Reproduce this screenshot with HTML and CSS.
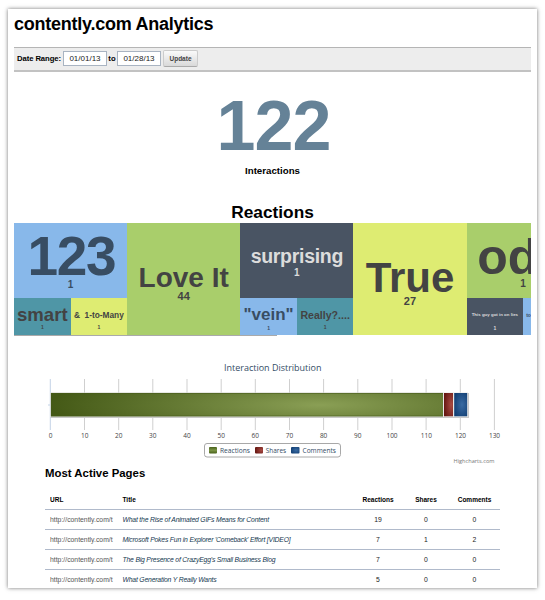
FILE: index.html
```html
<!DOCTYPE html>
<html lang="en">
<head>
<meta charset="utf-8">
<title>contently.com Analytics</title>
<link rel="stylesheet" href="styles.css">
</head>
<body>
<main class="card">
  <h1>contently.com Analytics</h1>
  <form class="filter">
    <b>Date Range:</b><span class="field">01/01/13</span><b>to</b><span class="field">01/28/13</span><button type="button">Update</button>
  </form>
  <section class="total">
    <div class="big">122</div>
    <div class="caption">Interactions</div>
  </section>
  <h2>Reactions</h2>
  <section class="map">
    <div class="col">
      <div class="tile blue w123"><span class="word">123</span><span class="n">1</span></div>
      <div class="pair">
        <div class="tile teal wsmart"><span class="word">smart</span><span class="n">1</span></div>
        <div class="tile yellow wmany"><span class="word">&amp;&nbsp; 1-to-Many</span><span class="n">1</span></div>
      </div>
    </div>
    <div class="col"><div class="tile green wlove"><span class="word">Love It</span><span class="n">44</span></div></div>
    <div class="col">
      <div class="tile slate wsurp"><span class="word">surprising</span><span class="n">1</span></div>
      <div class="pair">
        <div class="tile blue wvein"><span class="word">"vein"</span><span class="n">1</span></div>
        <div class="tile teal wreally"><span class="word">Really?....</span><span class="n">1</span></div>
      </div>
    </div>
    <div class="col"><div class="tile yellow wtrue"><span class="word">True</span><span class="n">27</span></div></div>
    <div class="col">
      <div class="tile green wodd"><span class="word">odd</span><span class="n">1</span></div>
      <div class="pair">
        <div class="tile slate wguy"><span class="word">This guy got in on lies</span><span class="n">1</span></div>
        <div class="tile blue wto"><span class="word">to</span></div>
      </div>
    </div>
  </section>
  <div class="scroll"></div>
  <svg class="chart" width="517" height="110" viewBox="14 358 517 110">
    <defs>
      <radialGradient id="g" gradientUnits="userSpaceOnUse" cx="320" cy="405" r="270" gradientTransform="translate(0 348.3) scale(1 .14)"><stop offset="0" stop-color="#8a9f55"/><stop offset="1" stop-color="#445916"/></radialGradient>
      <radialGradient id="r" cx=".8" cy=".5" r=".8"><stop offset="0" stop-color="#a84a42"/><stop offset="1" stop-color="#661712"/></radialGradient>
      <radialGradient id="b" cx=".6" cy=".5" r=".65"><stop offset="0" stop-color="#3a6ba3"/><stop offset="1" stop-color="#123f74"/></radialGradient>
      <linearGradient id="lg" x2="0" y2="1"><stop offset="0" stop-color="#48611a"/><stop offset=".5" stop-color="#7a9345"/><stop offset="1" stop-color="#48611a"/></linearGradient>
    </defs>
    <text class="ct" x="224" y="371.3" textLength="97.5" lengthAdjust="spacingAndGlyphs">Interaction Distribution</text>
    <path class="grid" d="M84.5 379v51M118.7 379v51M152.8 379v51M187 379v51M221.2 379v51M255.3 379v51M289.5 379v51M323.6 379v51M357.8 379v51M392 379v51M426.1 379v51M460.3 379v51M494.4 379v51"/>
    <path class="axis" d="M50.3 379v51M48 405h2"/>
    <rect x="50.5" y="393" width="418.5" height="25" fill="#c9c9c9"/>
    <rect x="50.5" y="392.5" width="417.5" height="24.5" fill="#e8e8e8"/>
    <rect x="51" y="393" width="392" height="23.3" fill="url(#g)"/>
    <path d="M51 393.4h392M51 416h392M51.4 393v23" stroke="#465a1b" stroke-width=".8" opacity=".75"/>
    <rect x="444" y="393" width="9" height="23.3" fill="url(#r)"/>
    <rect x="454.2" y="393" width="13" height="23.3" fill="url(#b)"/>
    <g class="tick">
      <text x="50.5" y="438">0</text><text x="84.7" y="438">10</text><text x="118.7" y="438">20</text><text x="152.8" y="438">30</text><text x="187" y="438">40</text><text x="221.2" y="438">50</text><text x="255.3" y="438">60</text><text x="289.5" y="438">70</text><text x="323.6" y="438">80</text><text x="357.8" y="438">90</text><text x="392" y="438">100</text><text x="426.3" y="438">110</text><text x="460.5" y="438">120</text><text x="494.5" y="438">130</text>
    </g>
    <rect x="204.5" y="443.5" width="136" height="13.5" rx="2.5" fill="#fff" stroke="#a8a8a8"/>
    <rect x="209" y="447" width="8" height="6.5" rx="1" fill="url(#lg)"/>
    <rect x="255" y="447" width="8" height="6.5" rx="1" fill="url(#r)"/>
    <rect x="291" y="447" width="8.5" height="6.5" rx="1" fill="url(#b)"/>
    <g class="leg">
      <text x="220" y="453" textLength="30" lengthAdjust="spacingAndGlyphs">Reactions</text>
      <text x="265.7" y="453" textLength="20.5" lengthAdjust="spacingAndGlyphs">Shares</text>
      <text x="302.5" y="453" textLength="33.5" lengthAdjust="spacingAndGlyphs">Comments</text>
    </g>
    <text class="credit" x="453.5" y="463" textLength="41" lengthAdjust="spacingAndGlyphs">Highcharts.com</text>
  </svg>
  <h3>Most Active Pages</h3>
  <div class="table">
    <div class="row head"><span class="url">URL</span><span class="title">Title</span><span>Reactions</span><span>Shares</span><span>Comments</span></div>
    <div class="row"><span class="url">http://contently.com/t</span><span class="title">What the Rise of Animated GIFs Means for Content</span><span>19</span><span>0</span><span>0</span></div>
    <div class="row"><span class="url">http://contently.com/t</span><span class="title">Microsoft Pokes Fun in Explorer 'Comeback' Effort [VIDEO]</span><span>7</span><span>1</span><span>2</span></div>
    <div class="row"><span class="url">http://contently.com/t</span><span class="title">The Big Presence of CrazyEgg's Small Business Blog</span><span>7</span><span>0</span><span>0</span></div>
    <div class="row"><span class="url">http://contently.com/t</span><span class="title">What Generation Y Really Wants</span><span>5</span><span>0</span><span>0</span></div>
  </div>
</main>
</body>
</html>
```
FILE: styles.css
```css
* { box-sizing: border-box; }
body { margin: 0; padding: 9px 8px; background: #fff; font-family: "Liberation Sans", Arial, sans-serif; color: #000; }
.card { width: 529px; height: 579px; padding: 0 6px; background: #fff; box-shadow: 0 0 4px rgba(0,0,0,.55); overflow: hidden; }
h1, h2, h3 { margin: 0; font-weight: bold; white-space: nowrap; }
h1 { height: 38px; font-size: 18px; letter-spacing: -.25px; line-height: 30px; }
.filter { display: flex; align-items: center; height: 25px; padding: 0 3px 2px; margin: 0; background: #ededed; border-top: 1px solid #b5b5b5; border-bottom: 2px solid #c2c2c2; font-size: 7.7px; white-space: nowrap; }
.filter b:first-child { width: 46px; letter-spacing: -.08px; }
.filter b:nth-of-type(2) { width: 10px; text-align: center; }
.field { width: 44px; height: 15px; line-height: 13px; text-align: center; background: #fff; border: 1px solid #a9b4c2; font-size: 8px; color: #222; }
button { width: 35px; height: 17px; margin-left: 2px; padding: 0; border: 1px solid #ccc; border-bottom-color: #aaa; border-radius: 2px; background: linear-gradient(#fafafa, #d9d9d9); font: bold 6.5px "Liberation Sans", Arial, sans-serif; color: #444; }
.total { height: 129px; padding-top: 15px; text-align: center; font-weight: bold; }
.big { height: 78px; line-height: 78px; font-size: 70px; letter-spacing: -1px; text-indent: 2px; color: #658297; }
.caption { line-height: 12px; font-size: 9.7px; }
h2 { height: 22px; line-height: 23px; font-size: 17.3px; text-align: center; }
.map { display: grid; grid-template-columns: repeat(5, 113.15px); height: 112px; overflow: hidden; font-weight: bold; color: #434343; }
.col { display: flex; flex-direction: column; height: 112px; }
.tile { flex: 1; min-width: 0; display: flex; flex-direction: column; align-items: center; overflow: hidden; white-space: nowrap; }
.pair { display: flex; height: 37px; flex: none; }
.blue { background: #88b8ea; color: #384d63; }
.green { background: #a9ce6b; }
.teal { background: #4f96a6; color: #434343; }
.yellow { background: #deec72; color: #434343; }
.slate { background: #495463; color: #dcdcdc; }
.word { flex: none; line-height: .85; }
.n { flex: none; font-size: 10px; line-height: 1; }
.pair .n { font-size: 5px; }
.w123 { padding-top: 10px; }
.w123 .word { font-size: 55px; letter-spacing: -1.3px; text-indent: 1.5px; }
.wsmart { padding-top: 9px; }
.wsmart .word { font-size: 18.6px; margin-bottom: 2.5px; }
.wmany { padding-top: 13.8px; }
.wmany .word { font-size: 8.3px; margin-bottom: 6.3px; }
.wlove { padding-top: 43px; }
.wlove .word { font-size: 28px; margin-bottom: 1.3px; }
.wlove .n, .wtrue .n { font-size: 11px; }
.wsurp { padding-top: 25px; }
.wsurp .word { font-size: 19.5px; letter-spacing: -.3px; margin-bottom: 3px; }
.wvein { padding-top: 9.6px; }
.wvein .word { font-size: 17px; margin-bottom: 3.5px; }
.wreally { padding-top: 12.8px; }
.wreally .word { font-size: 10.6px; margin-bottom: 5.7px; }
.wtrue { padding-top: 37px; }
.wtrue .word { font-size: 42px; }
.wodd { padding-top: 13px; }
.wodd .word { font-size: 50px; }
.wguy { padding-top: 15px; }
.wguy .word { font-size: 4.4px; margin-bottom: 9px; }
.wto { padding-top: 15px; }
.wto .word { align-self: flex-start; padding-left: 3px; font-size: 5px; }
.scroll { width: 263px; height: 1px; background: #aaa; }
.chart { display: block; margin-top: 22px; font-family: "Open Sans", "DejaVu Sans", sans-serif; }
.ct { font-size: 9px; fill: #344d66; }
.grid { stroke: #cfcfcf; stroke-width: 1; fill: none; }
.axis { stroke: #c3d3e6; stroke-width: 1; fill: none; }
.tick { font-size: 6.5px; fill: #444; text-anchor: middle; }
.leg { font-size: 6.8px; fill: #344d66; }
.credit { font-size: 6px; fill: #777; }
h3 { height: 22px; margin-left: 31px; font-size: 11.4px; line-height: 10px; }
.table { width: 455px; margin-left: 31px; font-size: 6.8px; color: #222; }
.row { display: grid; grid-template-columns: 69px 235px 48px 48px 49px; height: 20px; padding-left: 5px; line-height: 19px; border-bottom: 1px solid #b0bacb; text-align: center; white-space: nowrap; }
.row .url, .row .title { text-align: left; overflow: hidden; }
.row .url { width: 66px; letter-spacing: .02px; color: #555; }
.row .title { padding-left: 3.5px; font-style: italic; letter-spacing: -.18px; color: #14374f; }
.row.head { font-size: 6.5px; font-weight: bold; color: #000; }
.row.head .url, .row.head .title { color: #000; font-style: normal; letter-spacing: 0; }
.row:last-child { border: 0; }
```
